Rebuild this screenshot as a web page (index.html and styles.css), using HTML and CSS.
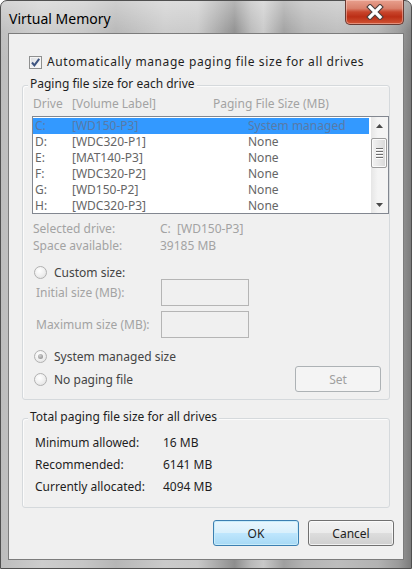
FILE: index.html
```html
<!DOCTYPE html>
<html>
<head>
<meta charset="utf-8">
<title>Virtual Memory</title>
<link rel="stylesheet" href="styles.css">
</head>
<body>
<div class="window">
  <div class="titlebar">
    <span class="title">Virtual Memory</span>
    <div class="close">
      <svg width="20" height="16" viewBox="0 0 20 16">
        <path d="M5 3 L15 13 M15 3 L5 13" stroke="#4e3f3d" stroke-width="5.4" stroke-linecap="square" fill="none"/>
        <path d="M5 3 L15 13 M15 3 L5 13" stroke="#ffffff" stroke-width="3.2" stroke-linecap="square" fill="none"/>
      </svg>
    </div>
  </div>
  <div class="client">
    <div class="auto-row">
      <span class="checkbox">
        <svg width="11" height="11" viewBox="0 0 11 11"><path d="M2 5.5 L4.4 8.4 L9.2 1.8" stroke="#3d5480" stroke-width="2" fill="none"/></svg>
      </span>
      <span class="auto-label">Automatically manage paging file size for all drives</span>
    </div>

    <div class="group g1">
      <div class="legend">Paging file size for each drive</div>
      <div class="list-head">
        <span>Drive</span><span>[Volume Label]</span><span>Paging File Size (MB)</span>
      </div>
      <div class="listbox">
        <div class="rows">
          <div class="row sel"><span>C:</span><span>[WD150-P3]</span><span>System managed</span></div>
          <div class="row"><span>D:</span><span>[WDC320-P1]</span><span>None</span></div>
          <div class="row"><span>E:</span><span>[MAT140-P3]</span><span>None</span></div>
          <div class="row"><span>F:</span><span>[WDC320-P2]</span><span>None</span></div>
          <div class="row"><span>G:</span><span>[WD150-P2]</span><span>None</span></div>
          <div class="row"><span>H:</span><span>[WDC320-P3]</span><span>None</span></div>
        </div>
        <div class="scrollbar">
          <div class="sb-btn"><svg width="7" height="4" viewBox="0 0 7 4"><path d="M0 4 L3.5 0 L7 4 Z" fill="#4a4a4a"/></svg></div>
          <div class="sb-track">
            <div class="thumb">
              <span class="grip"></span><span class="grip"></span><span class="grip"></span><span class="grip"></span>
            </div>
          </div>
          <div class="sb-btn"><svg width="7" height="4" viewBox="0 0 7 4"><path d="M0 0 L7 0 L3.5 4 Z" fill="#4a4a4a"/></svg></div>
        </div>
      </div>

      <div class="info">
        <span>Selected drive:</span><span>C:&nbsp;&nbsp;[WD150-P3]</span>
        <span>Space available:</span><span>39185 MB</span>
      </div>

      <div class="radio-row custom">
        <span class="radio"></span><span class="rlabel">Custom size:</span>
      </div>
      <div class="field-row">
        <span class="flabel">Initial size (MB):</span><span class="input"></span>
      </div>
      <div class="field-row second">
        <span class="flabel">Maximum size (MB):</span><span class="input"></span>
      </div>
      <div class="radio-row system">
        <span class="radio checked"><span class="dot"></span></span><span class="rlabel">System managed size</span>
      </div>
      <div class="radio-row nopage">
        <span class="radio"></span><span class="rlabel">No paging file</span>
        <span class="btn disabled set">Set</span>
      </div>
    </div>

    <div class="group g2">
      <div class="legend">Total paging file size for all drives</div>
      <div class="totals">
        <span>Minimum allowed:</span><span>16 MB</span>
        <span>Recommended:</span><span>6141 MB</span>
        <span>Currently allocated:</span><span>4094 MB</span>
      </div>
    </div>

    <div class="buttons">
      <span class="btn default">OK</span>
      <span class="btn">Cancel</span>
    </div>
  </div>
</div>
</body>
</html>
```

FILE: styles.css
```css
* { box-sizing: border-box; }
html, body { margin: 0; padding: 0; }
body {
  width: 412px;
  height: 569px;
  overflow: hidden;
  background: #ffffff;
  font-family: "Noto Sans", "Open Sans", sans-serif;
  font-size: 12px;
  color: #1e1e1e;
}

.window {
  width: 412px;
  height: 569px;
  display: flex;
  flex-direction: column;
  padding: 0 7px 8px;
  border: 1px solid #505050;
  border-radius: 7px 7px 0 0;
  background:
    linear-gradient(180deg, rgba(255,255,255,0.35) 0px, rgba(255,255,255,0.05) 30px, rgba(0,0,0,0) 60px),
    linear-gradient(90deg, #bdbdbd 0%, #cdcdcd 10%, #c6c6c6 20%, #b6b6b6 28%, #cbcbcb 40%, #c8c8c8 48%, #a8a8a8 53%, #8e8e8e 57%, #b9b9b9 61%, #c9c9c9 64%, #9f9f9f 69%, #b4b4b4 74%, #bdbdbd 82%, #b2b2b2 92%, #9a9a9a 97%, #7c7c7c 100%);
}

.titlebar {
  height: 32px;
  display: flex;
  align-items: flex-start;
}
.title {
  margin: 8px 0 0 1px;
  font-size: 14px;
  line-height: 19px;
  color: #000;
}
.close {
  margin: -1px 0 0 auto;
  width: 59px;
  height: 25px;
  border: 1px solid #6a3a32;
  border-top: none;
  border-radius: 0 0 5px 5px;
  background: linear-gradient(180deg, #e8a08e 0%, #d9806b 35%, #c8452c 50%, #bb2e16 70%, #d15535 100%);
  box-shadow: inset 0 0 0 1px rgba(255,220,210,0.45);
  display: flex;
  align-items: center;
  justify-content: center;
}

.client {
  flex: 1;
  background: #f0f0f0;
  border: 1px solid #7c7c7c;
  padding: 20px 9px 0 13px;
  display: flex;
  flex-direction: column;
  align-items: flex-start;
}

.auto-row {
  height: 16px;
  line-height: 16px;
  display: flex;
  align-items: center;
  gap: 5px;
  margin-left: 7px;
  color: #1e1e1e;
}
.auto-label { letter-spacing: 0.6px; white-space: nowrap; }
.checkbox {
  width: 13px;
  height: 13px;
  border: 1px solid #8e8f8f;
  background: linear-gradient(135deg, #d8dbe0 0%, #f4f4f4 70%, #ffffff 100%);
  box-shadow: inset 0 0 0 1px #f4f4f4;
  display: flex;
  align-items: center;
  justify-content: center;
}

.group {
  width: 368px;
  border: 1px solid #d5d9dc;
  border-radius: 3px;
  box-shadow: inset 1px 1px 0 #fbfbfb;
}
.g1 { margin-top: 15px; padding-bottom: 7px; }
.g2 { margin-top: 18px; padding-bottom: 9px; }
.legend {
  display: table;
  margin: -10px 0 0 5px;
  padding: 0 2px;
  line-height: 16px;
  background: #f0f0f0;
  color: #1e1e1e;
}

.list-head {
  margin-top: 4px;
  height: 16px;
  line-height: 16px;
  padding-left: 10px;
  display: grid;
  grid-template-columns: 39px 141px auto;
  color: #a3a3a3;
  white-space: nowrap;
}

.listbox {
  margin: 4px 0 0 9px;
  width: 357px;
  height: 98px;
  border: 1px solid #828790;
  background: #ffffff;
  display: flex;
}
.rows {
  flex: 1;
  padding-top: 1px;
}
.row {
  height: 16px;
  line-height: 16px;
  padding-left: 2px;
  margin-right: 2px;
  display: grid;
  grid-template-columns: 37px 176px auto;
  color: #666666;
  white-space: nowrap;
}
.row.sel {
  background: #3399ff;
  color: #587aa8;
}

.scrollbar {
  width: 17px;
  display: flex;
  flex-direction: column;
  background: linear-gradient(90deg, #e6e6e6 0%, #f4f4f4 40%, #f4f4f4 100%);
}
.sb-btn {
  height: 17px;
  display: flex;
  align-items: center;
  justify-content: center;
}
.sb-track {
  flex: 1;
  padding-top: 4px;
}
.thumb {
  width: 16px;
  height: 30px;
  border: 1px solid #9c9c9c;
  border-radius: 2px;
  background: linear-gradient(90deg, #f2f2f2 0%, #e6e6e6 50%, #d8d8d8 100%);
  box-shadow: inset 0 0 0 1px #fafafa;
  display: flex;
  flex-direction: column;
  align-items: center;
  justify-content: center;
  gap: 2px;
}
.grip {
  width: 7px;
  height: 1px;
  background: #6e6e6e;
  box-shadow: 0 1px 0 #ffffff;
}

.info {
  margin-top: 6px;
  padding-left: 10px;
  display: grid;
  grid-template-columns: 127px auto;
  line-height: 17px;
  color: #a3a3a3;
  white-space: nowrap;
}

.radio-row {
  display: flex;
  align-items: center;
  padding-left: 11px;
  gap: 7px;
  color: #444444;
}
.custom { margin-top: 11px; height: 14px; }
.system { margin-top: 10px; height: 16px; }
.nopage { margin-top: 2px; height: 26px; padding-right: 8px; }
.radio {
  width: 13px;
  height: 13px;
  border-radius: 50%;
  border: 1px solid #b1b1b1;
  background: radial-gradient(circle at 40% 35%, #ffffff 0%, #f0f0f0 50%, #dcdcdc 100%);
  display: flex;
  align-items: center;
  justify-content: center;
  flex: none;
}
.dot {
  width: 5px;
  height: 5px;
  border-radius: 50%;
  background: radial-gradient(circle at 40% 35%, #d0d0d0 0%, #9a9a9a 70%, #8a8a8a 100%);
}

.field-row {
  height: 27px;
  display: flex;
  align-items: center;
  padding-left: 13px;
  color: #a3a3a3;
}
.field-row.second { margin-top: 5px; }
.flabel { width: 125px; white-space: nowrap; }
.input {
  width: 88px;
  height: 27px;
  border: 1px solid #b5b5b5;
  background: #f0f0f0;
}

.btn {
  width: 86px;
  height: 26px;
  border: 1px solid #707070;
  border-radius: 3px;
  background: linear-gradient(180deg, #f2f2f2 0%, #ebebeb 48%, #dddddd 52%, #cfcfcf 100%);
  box-shadow: inset 0 0 0 1px rgba(255,255,255,0.7);
  display: flex;
  align-items: center;
  justify-content: center;
  color: #1e1e1e;
}
.btn.default {
  border-color: #3c7fb1;
  background: linear-gradient(180deg, #eaf6fd 0%, #d9f0fc 48%, #bee6fd 52%, #a7d9f5 100%);
  box-shadow: inset 0 0 0 1px #c8ecfa;
}
.btn.disabled {
  border-color: #adb2b5;
  background: #f4f4f4;
  box-shadow: none;
  color: #a0a0a0;
}
.set { margin-left: auto; }

.totals {
  margin-top: 7px;
  padding-left: 12px;
  display: grid;
  grid-template-columns: 128px auto;
  line-height: 22px;
  color: #1e1e1e;
  white-space: nowrap;
}

.buttons {
  margin-top: 12px;
  align-self: flex-end;
  display: flex;
  gap: 9px;
}
```
